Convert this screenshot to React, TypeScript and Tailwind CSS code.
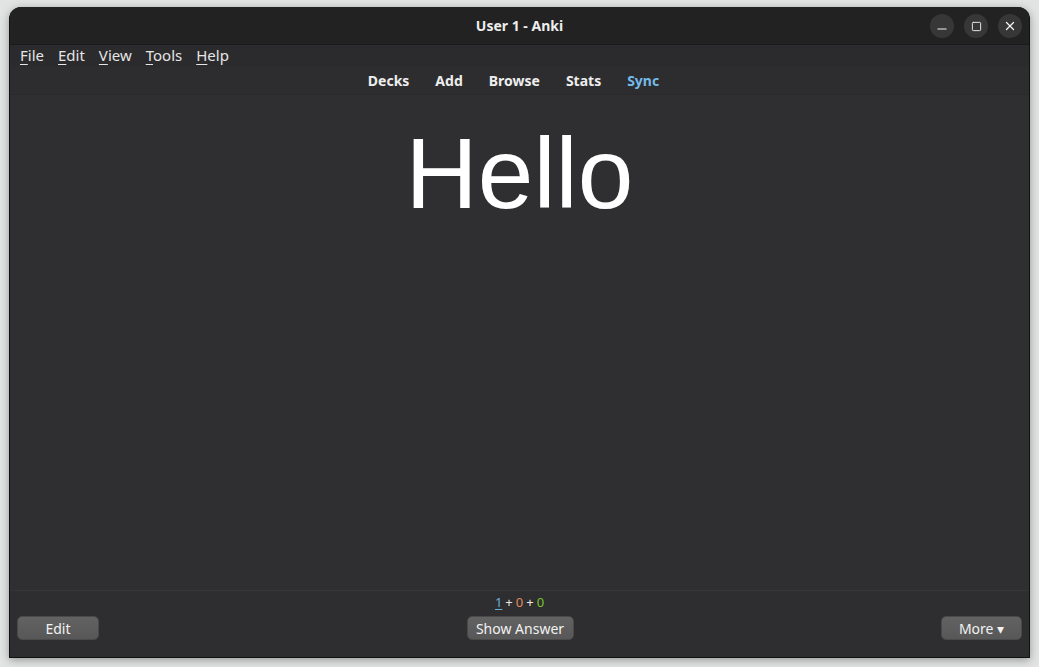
import { Minus, Square, X } from "lucide-react"

const menus = [
  { key: "F", rest: "ile" },
  { key: "E", rest: "dit" },
  { key: "V", rest: "iew" },
  { key: "T", rest: "ools" },
  { key: "H", rest: "elp" },
]

const tabs = ["Decks", "Add", "Browse", "Stats"]

function WindowButton({ children }: { children: React.ReactNode }) {
  return (
    <div className="flex h-[24px] w-[24px] items-center justify-center rounded-full bg-[#373737] text-[#f4f4f4]">
      {children}
    </div>
  )
}

function ReviewButton({ label, width }: { label: string; width: string }) {
  return (
    <button
      className={`flex h-[24px] ${width} items-center justify-center rounded-[5px] border border-[#4a4a4a] bg-gradient-to-b from-[#626262] to-[#575757] text-[14px] text-[#f2f2f2]`}
    >
      {label}
    </button>
  )
}

export default function App() {
  return (
    <div
      className="h-[667px] w-[1039px] bg-[#e2e4e4] pl-[9px] pr-[9px] pt-[7px]"
      style={{ fontFamily: '"Noto Sans", "DejaVu Sans", sans-serif' }}
    >
      <div className="flex h-[651px] w-[1021px] flex-col overflow-hidden rounded-t-[12px] border-x border-b border-[#111] bg-[#2f2f31] shadow-[0_2px_8px_rgba(0,0,0,0.35)]">
        {/* title bar */}
        <div className="relative flex h-[37px] shrink-0 items-center justify-center bg-[#222222]">
          <span className="text-[14px] font-bold text-[#eeeeee]">User 1 - Anki</span>
          <div className="absolute right-[7px] top-[7px] flex gap-[10px]">
            <WindowButton>
              <Minus size={14} strokeWidth={2} className="translate-y-[3px]" />
            </WindowButton>
            <WindowButton>
              <Square size={11} strokeWidth={2} />
            </WindowButton>
            <WindowButton>
              <X size={14} strokeWidth={2.2} />
            </WindowButton>
          </div>
        </div>

        {/* menu bar */}
        <div className="flex h-[23px] shrink-0 items-center gap-[14px] border-t border-[#1a1a1a] bg-[#2b2b2d] pb-[1px] pl-[10px] text-[15px] text-[#e6e6e6]">
          {menus.map((m) => (
            <span key={m.key}>
              <span className="underline underline-offset-[3px]">{m.key}</span>
              {m.rest}
            </span>
          ))}
        </div>

        {/* toolbar */}
        <div className="flex h-[28px] shrink-0 items-center justify-center gap-[26px] border-b border-[#2a2a2c] bg-[#2d2d2f] pr-[12px] text-[14px] font-bold text-[#eeeeee]">
          {tabs.map((t) => (
            <span key={t}>{t}</span>
          ))}
          <span className="text-[#74bbea]">Sync</span>
        </div>

        {/* card */}
        <div className="flex flex-1 justify-center pt-[28px]">
          <div
            className="text-[100px] leading-none text-white"
            style={{ fontFamily: '"Liberation Sans", Arial, sans-serif' }}
          >
            Hello
          </div>
        </div>

        {/* bottom bar */}
        <div className="flex h-[67px] shrink-0 flex-col border-t border-[#363638] bg-[#2e2e30] px-[7px]">
          <div className="flex h-[23px] items-center justify-center gap-[3px] text-[13px] text-[#e8e8e8]">
            <span className="text-[#6aaed8] underline underline-offset-[2px]">1</span>
            <span>+</span>
            <span className="text-[#e38a5c]">0</span>
            <span>+</span>
            <span className="text-[#76c42e]">0</span>
          </div>
          <div className="flex items-center justify-between pt-[2px]">
            <ReviewButton label="Edit" width="w-[82px]" />
            <ReviewButton label="Show Answer" width="w-[107px]" />
            <ReviewButton label="More ▾" width="w-[81px]" />
          </div>
        </div>
      </div>
    </div>
  )
}
